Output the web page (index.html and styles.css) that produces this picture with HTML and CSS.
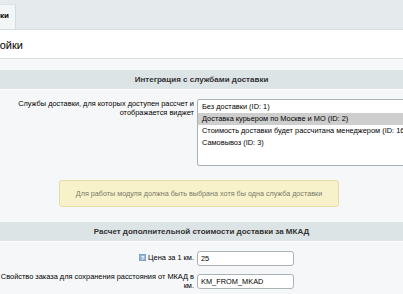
FILE: index.html
```html
<!DOCTYPE html>
<html lang="ru">
<head>
<meta charset="utf-8">
<link rel="stylesheet" href="styles.css">
</head>
<body>
<div class="tabs">
  <div class="tab"><span class="tab-text">Настройки</span></div>
</div>
<div class="title-bar"><h1 class="title">Настройки</h1></div>
<div class="content">
  <div class="heading">Интеграция с службами доставки</div>
  <div class="row row-services">
    <div class="label">Службы доставки, для которых доступен рассчет и отображается виджет</div>
    <div class="field">
      <div class="listbox" role="listbox">
        <div class="option">Без доставки (ID: 1)</div>
        <div class="option selected">Доставка курьером по Москве и МО (ID: 2)</div>
        <div class="option">Стоимость доставки будет рассчитана менеджером (ID: 16)</div>
        <div class="option">Самовывоз (ID: 3)</div>
      </div>
    </div>
  </div>
  <div class="notice">Для работы модуля должна быть выбрана хотя бы одна служба доставки</div>
  <div class="heading heading-2">Расчет дополнительной стоимости доставки за МКАД</div>
  <div class="row row-input">
    <div class="label"><svg class="help" width="7" height="7" viewBox="0 0 7 7"><rect x="0" y="0" width="7" height="7" fill="#6b8fc0"/><rect x="0.5" y="0.5" width="6" height="6" fill="#93b3da"/><text x="3.5" y="6" font-size="6" font-family="Liberation Sans, sans-serif" font-weight="bold" fill="#fff" text-anchor="middle">?</text></svg>Цена за 1 км.</div>
    <div class="field"><input class="text-input" type="text" value="25"></div>
  </div>
  <div class="row row-input row-last">
    <div class="label">Свойство заказа для сохранения расстояния от МКАД в км.</div>
    <div class="field"><input class="text-input" type="text" value="KM_FROM_MKAD"></div>
  </div>
</div>
</body>
</html>
```

FILE: styles.css
```css
html, body {
  margin: 0;
  padding: 0;
  overflow: hidden;
}
body {
  width: 403px;
  height: 294px;
  font-family: "Liberation Sans", Arial, sans-serif;
  color: #000;
  background: #f5f7f8;
}
.tabs {
  height: 29px;
  background: #e5ebed;
  border-bottom: 1px solid #d6dee0;
  display: flex;
  align-items: flex-end;
  overflow: hidden;
}
.tab {
  height: 25px;
  width: 16px;
  background: #f3f6f7;
  border-right: 1px solid #d3dbde;
  border-top: 1px solid #dde4e6;
  display: flex;
  align-items: center;
  justify-content: flex-end;
  overflow: hidden;
  box-sizing: border-box;
  padding: 0 6px 3px 0;
}
.tab-text {
  font-size: 8px;
  font-weight: bold;
  color: #000;
  white-space: nowrap;
}
.title-bar {
  height: 28px;
  background: #fff;
  border-bottom: 1px solid #dbe2e4;
  display: flex;
  align-items: center;
  overflow: hidden;
}
.title {
  margin: 0 0 0 -31px;
  font-size: 11px;
  font-weight: normal;
  color: #000;
  white-space: nowrap;
  padding-top: 2px;
}
.content {
  padding-top: 11px;
}
.heading {
  height: 19px;
  line-height: 19px;
  background: #dde4e6;
  border-bottom: 1px solid #fff;
  text-align: center;
  font-size: 8px;
  font-weight: bold;
  color: #333;
  white-space: nowrap;
}
.row {
  display: flex;
  gap: 3px;
}
.label {
  width: 194px;
  flex: none;
  text-align: right;
  font-size: 7.4px;
  line-height: 8.5px;
  color: #000;
}
.field {
  flex: 1;
  min-width: 0;
}
.row-services {
  margin-top: 9px;
}
.row-services .label {
  padding-top: 1px;
}
.listbox {
  width: 260px;
  height: 67px;
  background: #fff;
  border: 1px solid #a9b3b6;
  border-radius: 2px;
  padding: 1px 0;
  box-sizing: border-box;
}
.option {
  height: 12px;
  line-height: 12px;
  padding-left: 4px;
  font-size: 7.4px;
  white-space: nowrap;
  color: #000;
}
.option.selected {
  background: #cecece;
}
.notice {
  margin: 14px 0 0 59px;
  width: 280px;
  height: 27px;
  box-sizing: border-box;
  background: #f8f2ca;
  border: 1px solid #e6dca6;
  border-radius: 3px;
  display: flex;
  align-items: center;
  justify-content: center;
  font-size: 7.2px;
  color: #7a7a6a;
  white-space: nowrap;
}
.heading-2 {
  margin-top: 15px;
}
.row-input {
  margin-top: 9px;
  align-items: center;
}
.row-input + .row-input {
  margin-top: 7px;
}
.help {
  vertical-align: -1px;
  margin-right: 2px;
}
.text-input {
  display: block;
  width: 97px;
  height: 15px;
  box-sizing: border-box;
  border: 1px solid #a9b3b6;
  border-radius: 3px;
  background: #fff;
  padding: 0 3px;
  font-family: "Liberation Sans", Arial, sans-serif;
  font-size: 7.4px;
  color: #000;
  margin: 0;
  outline: none;
}
```
